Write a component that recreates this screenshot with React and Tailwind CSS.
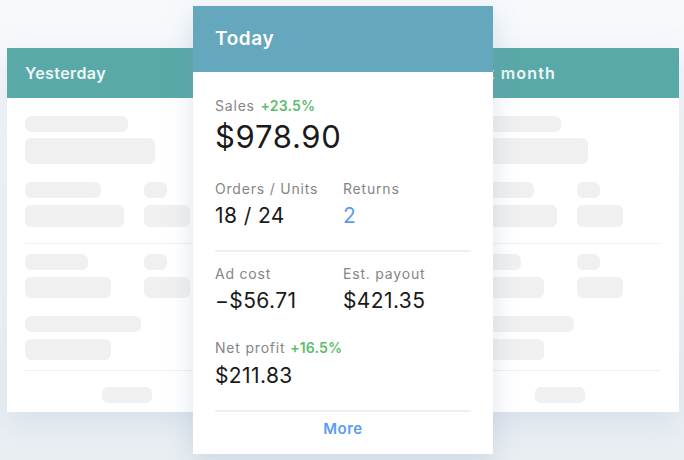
import React from 'react';

const FONT = { fontFamily: 'Inter, "Open Sans", sans-serif' };

const Bar = ({ className }) => <div className={`rounded-md bg-[#f0f0f1] ${className}`} />;

// blurred placeholder card shown behind the Today card
const GhostCard = ({ title, titleClass = 'tracking-[0.4px]' }) => (
  <div className="w-[239px] shrink-0 mt-[42px] bg-white shadow-[0_12px_30px_rgba(160,180,200,0.25)]">
    <div className="h-[50px] bg-[#59a9a8] flex items-center px-[18px]">
      <span className={`text-white/90 text-[16px] font-semibold ${titleClass}`}>{title}</span>
    </div>
    <div className="px-[18px] pt-[18px] pb-[9px]">
      <Bar className="w-[103px] h-[16px]" />
      <Bar className="w-[130px] h-[26px] mt-[6px]" />
      <div className="flex gap-[19px] mt-[18px]">
        <div className="w-[100px]">
          <Bar className="w-[76px] h-[16px]" />
          <Bar className="w-[99px] h-[22px] mt-[7px]" />
        </div>
        <div>
          <Bar className="w-[23px] h-[16px]" />
          <Bar className="w-[46px] h-[22px] mt-[7px]" />
        </div>
      </div>
      <div className="h-px bg-[#f0f1f3] mt-[16px]" />
      <div className="flex gap-[19px] mt-[10px]">
        <div className="w-[100px]">
          <Bar className="w-[63px] h-[16px]" />
          <Bar className="w-[86px] h-[21px] mt-[7px]" />
        </div>
        <div>
          <Bar className="w-[23px] h-[16px]" />
          <Bar className="w-[46px] h-[21px] mt-[7px]" />
        </div>
      </div>
      <Bar className="w-[116px] h-[16px] mt-[18px]" />
      <Bar className="w-[86px] h-[21px] mt-[7px]" />
      <div className="h-px bg-[#f0f1f3] mt-[10px]" />
      <Bar className="w-[50px] h-[16px] mt-[16px] mx-auto" />
    </div>
  </div>
);

const Label = ({ children, className = '' }) => (
  <div className={`text-[14px] leading-[20px] text-[#858585] tracking-[0.8px] ${className}`}>{children}</div>
);

const Value = ({ children, className = 'text-[#1a1a1a]' }) => (
  <div className={`text-[21px] leading-[28px] tracking-[0.4px] mt-[3px] ${className}`}>{children}</div>
);

export default function App() {
  return (
    <div
      className="w-[684px] h-[460px] overflow-hidden bg-[linear-gradient(180deg,#f7f9fc_0%,#f1f5f8_60%,#e9eef3_100%)]"
      style={FONT}
    >
      <div className="flex items-start pl-[7px] pt-[6px]">
        <GhostCard title="Yesterday" />

        <div className="relative z-10 w-[300px] shrink-0 -mx-[53px] bg-white shadow-[0_8px_24px_rgba(120,150,180,0.25)]">
          <div className="h-[66px] bg-[#65a7bd] flex items-center px-[22px]">
            <span className="text-white text-[19px] font-semibold tracking-[0.6px]">Today</span>
          </div>
          <div className="px-[22px] pt-[24px] pb-[15px]">
            <Label>
              Sales <span className="ml-[1px] font-semibold text-[#5cbd6a] tracking-[0.2px]">+23.5%</span>
            </Label>
            <div className="text-[31px] leading-[38px] text-[#1a1a1a] tracking-[0.7px] mt-[2px]">$978.90</div>
            <div className="flex mt-[23px]">
              <div className="w-[128px]">
                <Label>Orders / Units</Label>
                <Value>18 / 24</Value>
              </div>
              <div>
                <Label>Returns</Label>
                <Value className="text-[#5b9bf3]">2</Value>
              </div>
            </div>
            <div className="h-[2px] bg-[#eeeff1] mt-[20px]" />
            <div className="flex mt-[12px]">
              <div className="w-[128px]">
                <Label>Ad cost</Label>
                <Value>−$56.71</Value>
              </div>
              <div>
                <Label>Est. payout</Label>
                <Value>$421.35</Value>
              </div>
            </div>
            <Label className="mt-[23px]">
              Net profit <span className="font-semibold text-[#5cbd6a] tracking-[0.2px]">+16.5%</span>
            </Label>
            <div className="text-[21px] leading-[28px] tracking-[0.4px] text-[#1a1a1a] mt-[4px]">$211.83</div>
            <div className="h-[2px] bg-[#eeeff1] mt-[20px]" />
            <div className="text-center text-[15px] leading-[20px] font-semibold tracking-[0.5px] text-[#5b9bf3] mt-[7px]">
              More
            </div>
          </div>
        </div>

        <GhostCard title="Last month" titleClass="tracking-[1.2px]" />
      </div>
    </div>
  );
}
